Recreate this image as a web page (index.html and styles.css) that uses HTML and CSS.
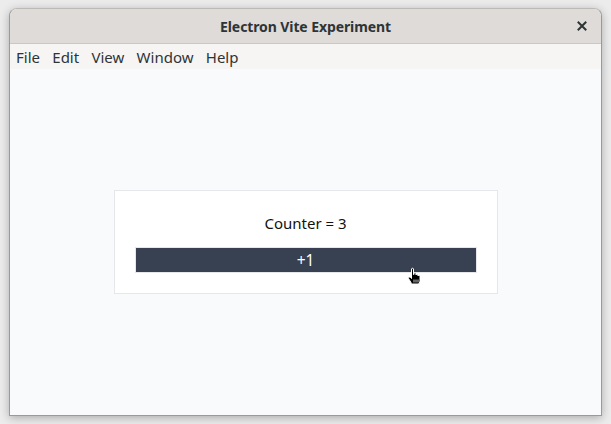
FILE: index.html
```html
<!DOCTYPE html>
<html>
<head>
<meta charset="utf-8">
<link rel="stylesheet" href="styles.css">
</head>
<body>
<div class="desktop">
  <div class="window">
    <div class="titlebar">
      <span class="title">Electron Vite Experiment</span>
      <span class="close">
        <svg width="10" height="10" viewBox="0 0 10 10"><path d="M1.5 1.5 L8.5 8.5 M8.5 1.5 L1.5 8.5" stroke="#2e3436" stroke-width="2" stroke-linecap="square"/></svg>
      </span>
    </div>
    <div class="menubar">
      <span class="menu-item">File</span>
      <span class="menu-item">Edit</span>
      <span class="menu-item">View</span>
      <span class="menu-item">Window</span>
      <span class="menu-item">Help</span>
    </div>
    <div class="content">
      <div class="card">
        <p class="counter">Counter = 3</p>
        <button class="btn">+1</button>
        <svg class="cursor" width="16" height="19" viewBox="0 0 16 18">
          <path d="M4.5 1.5 C4.5 0.5 6.5 0.5 6.5 1.5 L6.5 7 L7 7 L7 6 C7 5 9 5 9 6 L9 7.5 C9 6.5 11 6.5 11 7.5 L11 8.5 C11 7.5 13 7.5 13 8.5 L13 13 C13 15 12 16.5 11 16.5 L6 16.5 C5 16.5 4.5 16 4 15 L1.5 11 C1 10 2.5 9 3.5 10 L4.5 11 Z" fill="#000" stroke="#fff" stroke-width="1"/>
          <path d="M7 12 V15 M9 12 V15 M11 12 V15" stroke="#fff" stroke-width="0.8"/>
        </svg>
      </div>
    </div>
  </div>
</div>
</body>
</html>
```
FILE: styles.css
```css
html, body {
  margin: 0;
  padding: 0;
}
body {
  width: 611px;
  height: 424px;
  background: #ececec;
  overflow: hidden;
  font-family: "Noto Sans", "Open Sans", sans-serif;
}
.desktop {
  padding: 8px 9px 10px 9px;
  height: 424px;
  box-sizing: border-box;
}
.window {
  height: 406px;
  display: flex;
  flex-direction: column;
  border: 1px solid #9a9a9a;
  border-top-color: #bdbab6;
  border-radius: 8px 8px 0 0;
  box-shadow: 0 2px 10px rgba(0,0,0,0.28);
  overflow: hidden;
  background: #f9fafb;
}
.titlebar {
  height: 34px;
  flex: none;
  background: #dedbd8;
  border-bottom: 1px solid #cdc7c2;
  display: flex;
  align-items: center;
  justify-content: center;
  position: relative;
}
.title {
  font-weight: bold;
  font-size: 14px;
  color: #2e3436;
  letter-spacing: -0.1px;
}
.close {
  position: absolute;
  right: 14px;
  top: 12px;
  display: flex;
}
.menubar {
  height: 25px;
  flex: none;
  background: #f6f5f4;
  display: flex;
  align-items: center;
  padding-left: 6px;
}
.menu-item {
  font-size: 15px;
  color: #2e3436;
  padding: 0 5px 0 0;
  margin-right: 7.3px;
  line-height: 24px;
}
.content {
  flex: 1;
  display: flex;
  align-items: center;
  justify-content: center;
  background: #f9fafb;
}
.card {
  position: relative;
  width: 342px;
  background: #fff;
  border: 1px solid #e5e7eb;
  padding: 20px 20px 20px 20px;
  display: flex;
  flex-direction: column;
  align-items: stretch;
}
.counter {
  margin: 0 0 12px 0;
  text-align: center;
  font-size: 15px;
  line-height: 24px;
  color: #111;
}
.btn {
  height: 26px;
  background: #374151;
  color: #fff;
  border: 1px solid #e5e7eb;
  font-family: "Noto Sans", "Open Sans", sans-serif;
  font-size: 15.5px;
  line-height: 22px;
  padding: 0;
}
.cursor {
  position: absolute;
  left: 292px;
  top: 76px;
}
```
